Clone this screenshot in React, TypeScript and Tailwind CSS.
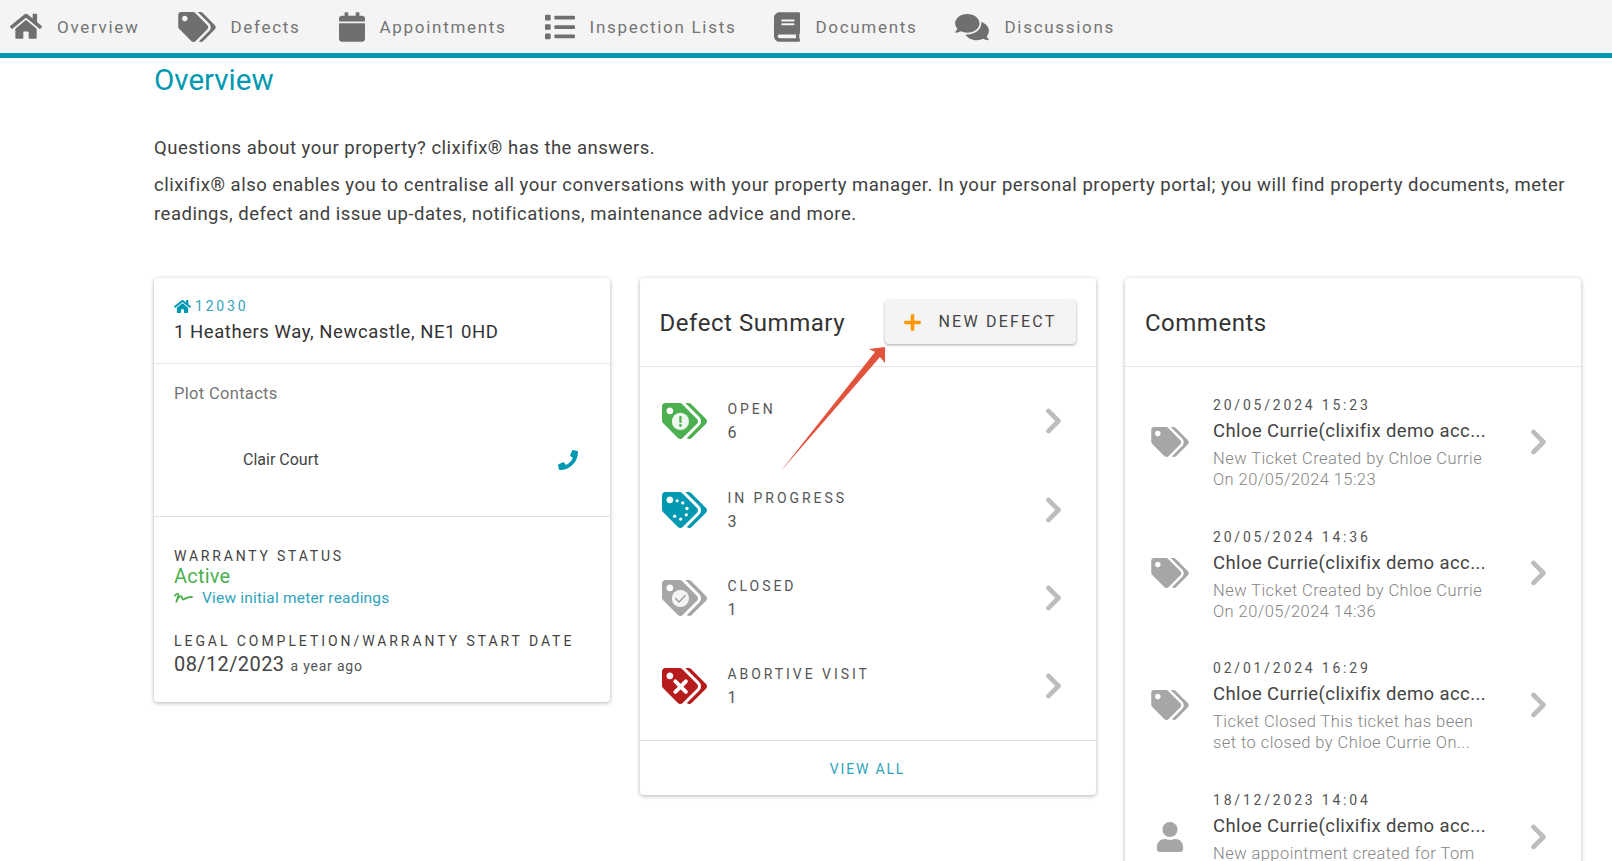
import React from "react";
import { FaHome, FaTags, FaCalendar, FaList, FaBook, FaComments, FaPhone, FaUser, FaPlus } from "react-icons/fa";

const TAGS =
  "M497.941 225.941L286.059 14.059A48 48 0 0 0 252.118 0H48C21.49 0 0 21.49 0 48v204.118a48 48 0 0 0 14.059 33.941l211.882 211.882c18.744 18.745 49.136 18.746 67.882 0l204.118-204.118c18.745-18.745 18.745-49.137 0-67.882zM112 160c-26.51 0-48-21.49-48-48s21.49-48 48-48 48 21.49 48 48-21.49 48-48 48zm513.941 133.823L421.823 497.941c-18.745 18.745-49.137 18.745-67.882 0l-.36-.36L527.64 323.522c16.999-16.999 26.36-39.6 26.36-63.64s-9.362-46.641-26.36-63.64L331.397 0h48.721a48 48 0 0 1 33.941 14.059l211.882 211.882c18.745 18.745 18.745 49.137 0 67.882z";

function StatusTag({ kind, color }: { kind: "open" | "progress" | "closed" | "abortive"; color: string }) {
  return (
    <svg viewBox="0 0 640 512" className="w-[45px] h-[36px] shrink-0" fill={color}>
      <path d={TAGS} />
      {kind === "open" && (
        <>
          <circle cx="262" cy="262" r="122" fill="#eef8ef" />
          <rect x="246" y="185" width="32" height="100" rx="10" fill={color} />
          <circle cx="262" cy="320" r="20" fill={color} />
        </>
      )}
      {kind === "closed" && (
        <>
          <circle cx="262" cy="262" r="122" fill="#f4f4f4" />
          <path d="M195 265l48 48 88-92" fill="none" stroke={color} strokeWidth="24" strokeLinecap="round" strokeLinejoin="round" />
        </>
      )}
      {kind === "progress" && (
        <g fill="#ffffff">
          <circle cx="215" cy="125" r="22" />
          <circle cx="295" cy="155" r="24" />
          <circle cx="355" cy="235" r="24" />
          <circle cx="345" cy="325" r="24" />
          <circle cx="265" cy="385" r="24" />
          <circle cx="180" cy="345" r="24" />
        </g>
      )}
      {kind === "abortive" && (
        <path d="M190 190l150 150M340 190L190 340" fill="none" stroke="#ffffff" strokeWidth="56" strokeLinecap="round" />
      )}
    </svg>
  );
}

function Chevron() {
  return (
    <svg viewBox="0 0 17 26" className="w-[17px] h-[26px] shrink-0" fill="none" stroke="#bdbdbd" strokeWidth="4.6" strokeLinejoin="round" strokeLinecap="round">
      <path d="M3.5 3L13.5 13L3.5 23" />
    </svg>
  );
}

function StatusRow({ label, value, kind, color }: { label: string; value: string; kind: "open" | "progress" | "closed" | "abortive"; color: string }) {
  return (
    <div className="h-[88.4px] flex items-center pl-[22px] pr-[34px]">
      <StatusTag kind={kind} color={color} />
      <div className="ml-[21px] flex-1">
        <div className="text-[14px] leading-[24px] tracking-[0.21em] text-[#555555]">{label}</div>
        <div className="text-[16px] leading-[24px] text-[#555555]">{value}</div>
      </div>
      <Chevron />
    </div>
  );
}

function CommentRow({ date, line1, line2, user }: { date: string; line1: string; line2: string; user?: boolean }) {
  return (
    <div className="h-[131.6px] flex items-center pl-[26px] pr-[34px] shrink-0">
      <div className="w-[38px] flex justify-center shrink-0">
        {user ? (
          <FaUser className="w-[28px] h-[30px] text-[#a6a6a6]" />
        ) : (
          <FaTags className="w-[38px] h-[30px] text-[#a6a6a6]" />
        )}
      </div>
      <div className="ml-[24px] w-[275px]">
        <div className="text-[14px] leading-[24px] tracking-[0.2em] text-[#555555]">{date}</div>
        <div className="text-[18.5px] leading-[28px] tracking-[0.4px] text-[#444444] whitespace-nowrap">Chloe Currie(clixifix demo acc...</div>
        <div className="text-[16.5px] leading-[21px] tracking-[0.44px] mt-[3px] text-[#858585] font-light">
          <div className="whitespace-nowrap">{line1}</div>
          <div className="whitespace-nowrap">{line2}</div>
        </div>
      </div>
      <div className="flex-1" />
      <Chevron />
    </div>
  );
}

function NavItem({ icon, label }: { icon: React.ReactNode; label: string }) {
  return (
    <div className="flex items-center gap-[15px]">
      {icon}
      <span className="text-[17px] tracking-[0.1em] text-[#757575] pt-[2px]">{label}</span>
    </div>
  );
}

export default function App() {
  return (
    <div className="relative h-[861px] overflow-hidden bg-white font-['Roboto',sans-serif] text-[#404040]">
      <nav className="h-[58px] bg-[#f4f4f4] border-b-[5px] border-[#0099b1] flex items-center gap-[38px] pl-[10px]">
        <NavItem label="Overview" icon={<FaHome className="w-[32px] h-[28.5px] text-[#6f6f6f]" />} />
        <NavItem label="Defects" icon={<FaTags className="w-[38px] h-[30px] text-[#6f6f6f]" />} />
        <NavItem label="Appointments" icon={<FaCalendar className="w-[26px] h-[30px] text-[#6f6f6f]" />} />
        <NavItem label="Inspection Lists" icon={<FaList className="w-[30px] h-[30px] text-[#6f6f6f]" />} />
        <NavItem label="Documents" icon={<FaBook className="w-[26px] h-[30px] text-[#6f6f6f]" />} />
        <NavItem label="Discussions" icon={<FaComments className="w-[34px] h-[30px] text-[#6f6f6f]" />} />
      </nav>

      <main className="pl-[154px] pr-[32px]">
        <h1 className="text-[29.5px] leading-[44px] text-[#0099b1]">Overview</h1>
        <p className="text-[18.5px] leading-[29px] tracking-[0.5px] mt-[32px]">Questions about your property? clixifix® has the answers.</p>
        <p className="text-[18.5px] leading-[29px] tracking-[0.5px] mt-[8px]">
          clixifix® also enables you to centralise all your conversations with your property manager. In your personal property portal; you will find property documents, meter readings, defect and issue up-dates, notifications, maintenance advice and more.
        </p>

        <div className="grid grid-cols-[456px_456px_456px] gap-[29.5px] mt-[49px] items-start">
          <section className="rounded-[4px] bg-white shadow-[0_1px_4px_rgba(0,0,0,0.3)] h-[424px]">
            <div className="h-[86px] border-b border-[#e6e6e6] px-[20px] pt-[18px]">
              <div className="flex items-center gap-[4px] text-[#2fa3bb] text-[14px] leading-[20px] tracking-[0.2em]">
                <FaHome className="w-[17px] h-[15px] text-[#0099b1]" />
                <span>12030</span>
              </div>
              <div className="text-[18.5px] leading-[32px] tracking-[0.55px] text-[#333333]">1 Heathers Way, Newcastle, NE1 0HD</div>
            </div>
            <div className="h-[153px] border-b border-[#e0e0e0] px-[20px] pt-[18px]">
              <div className="text-[16.5px] leading-[24px] tracking-[0.32px] text-[#757575]">Plot Contacts</div>
              <div className="flex items-center justify-between mt-[42px] pl-[69px] pr-[12px]">
                <span className="text-[16px] leading-[24px] text-[#444444]">Clair Court</span>
                <FaPhone className="w-[20px] h-[20px] text-[#0099b1]" />
              </div>
            </div>
            <div className="px-[20px] pt-[29px]">
              <div className="text-[14px] leading-[20px] tracking-[0.2em] text-[#444444]">WARRANTY STATUS</div>
              <div className="text-[20px] leading-[21px] tracking-[0.2px] text-[#4caf50]">Active</div>
              <div className="flex items-center gap-[9px] text-[15.5px] leading-[20px] tracking-[0.2px] text-[#2fa3bb] mt-[1px]">
                <svg viewBox="0 0 20 12" className="w-[19px] h-[12px]" fill="none" stroke="#4caf50" strokeWidth="1.9" strokeLinecap="round" strokeLinejoin="round">
                  <path d="M1 3.5C3 1 5.5 1 4.5 4C3.5 7 2.5 10 2.5 10C4 6 7 3 8 4.5C8.8 6 8.5 8 10 7.5C12 6.8 14 4.5 19 5" />
                </svg>
                <span>View initial meter readings</span>
              </div>
              <div className="text-[14px] leading-[20px] tracking-[0.21em] text-[#444444] mt-[23px]">LEGAL COMPLETION/WARRANTY START DATE</div>
              <div className="flex items-baseline gap-[6px] leading-[26px]">
                <span className="text-[20px] tracking-[0.4px] text-[#444444]">08/12/2023</span>
                <span className="text-[14px] tracking-[0.8px] text-[#555555]">a year ago</span>
              </div>
            </div>
          </section>

          <section className="rounded-[4px] bg-white shadow-[0_1px_4px_rgba(0,0,0,0.3)] h-[517px]">
            <div className="h-[89px] border-b border-[#e6e6e6] flex items-center justify-between pl-[20px] pr-[20px]">
              <h2 className="text-[24px] tracking-[0.55px] text-[#333333] pt-[2px]">Defect Summary</h2>
              <button className="w-[191px] h-[44px] rounded-[4px] bg-[#f4f4f4] shadow-[0_1px_3px_rgba(0,0,0,0.35)] flex items-center pl-[18px] gap-[17px]">
                <FaPlus className="w-[19px] h-[19px] text-[#ff9800]" />
                <span className="text-[16px] tracking-[2.2px] text-[#444444]">NEW DEFECT</span>
              </button>
            </div>
            <div className="pt-[10px] pb-[9px] border-b border-[#e0e0e0]">
              <StatusRow label="OPEN" value="6" kind="open" color="#4caf50" />
              <StatusRow label="IN PROGRESS" value="3" kind="progress" color="#0099b1" />
              <StatusRow label="CLOSED" value="1" kind="closed" color="#a6a6a6" />
              <StatusRow label="ABORTIVE VISIT" value="1" kind="abortive" color="#b71c1c" />
            </div>
            <div className="h-[54px] pt-[3px] flex items-center justify-center text-[14px] tracking-[0.13em] text-[#2fa3bb]">VIEW ALL</div>
          </section>

          <section className="rounded-[4px] bg-white shadow-[0_1px_4px_rgba(0,0,0,0.3)] h-[640px]">
            <div className="h-[89px] border-b border-[#e6e6e6] flex items-center pl-[20px]">
              <h2 className="text-[24px] tracking-[0.5px] text-[#333333] pt-[2px]">Comments</h2>
            </div>
            <div className="flex flex-col pt-[9px]">
              <CommentRow date="20/05/2024 15:23" line1="New Ticket Created by Chloe Currie" line2="On 20/05/2024 15:23" />
              <CommentRow date="20/05/2024 14:36" line1="New Ticket Created by Chloe Currie" line2="On 20/05/2024 14:36" />
              <CommentRow date="02/01/2024 16:29" line1="Ticket Closed This ticket has been" line2="set to closed by Chloe Currie On..." />
              <CommentRow user date="18/12/2023 14:04" line1="New appointment created for Tom" line2={"\u00a0"} />
            </div>
          </section>
        </div>
      </main>

      <svg className="absolute left-0 top-0 w-[1612px] h-[861px] pointer-events-none" viewBox="0 0 1612 861">
        <path d="M780 472L875 352L869 349L885 347L885 363L880 357Z" fill="#e2533c" />
      </svg>
    </div>
  );
}
